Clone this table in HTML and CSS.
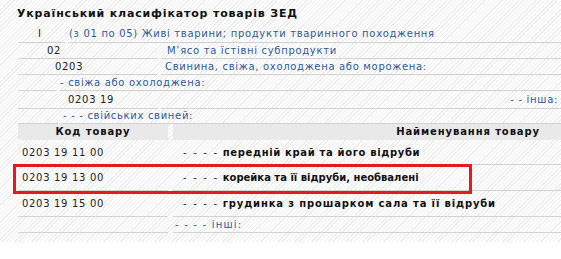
FILE: index.html
```html
<!DOCTYPE html>
<html lang="uk">
<head>
<meta charset="utf-8">
<link rel="stylesheet" href="styles.css">
</head>
<body>
<div class="page">
  <h1 class="title">Український класифікатор товарів ЗЕД</h1>
  <div class="tree">
    <div class="row r1"><div class="c">I</div><div class="d blue">(з 01 по 05) Живі тварини; продукти тваринного походження</div></div>
    <div class="row r2"><div class="c">02</div><div class="d blue">М’ясо та їстівні субпродукти</div></div>
    <div class="row r3"><div class="c">0203</div><div class="d blue">Свинина, свіжа, охолоджена або морожена:</div></div>
    <div class="row r4"><div class="c"></div><div class="d blue">- свіжа або охолоджена:</div></div>
    <div class="row r5"><div class="c">0203 19</div><div class="d blue">- - інша:</div></div>
    <div class="row r6"><div class="c"></div><div class="d blue">- - - свійських свиней:</div></div>
  </div>
  <div class="goods">
    <div class="grow head"><div class="gc">Код товару</div><div class="gd">Найменування товару</div></div>
    <div class="grow item first"><div class="gc">0203 19 11 00</div><div class="gd"><span class="dash">- - - -</span> <b>передній край та його відруби</b></div></div>
    <div class="grow item narrow"><div class="gc">0203 19 13 00</div><div class="gd"><span class="dash">- - - -</span> <b>корейка та її відруби, необвалені</b></div></div>
    <div class="grow item wide"><div class="gc">0203 19 15 00</div><div class="gd"><span class="dash">- - - -</span> <b>грудинка з прошарком сала та її відруби</b></div></div>
    <div class="grow last"><div class="gc"></div><div class="gd blue">- - - - інші:</div></div>
    <div class="mark"></div>
  </div>
</div>
</body>
</html>
```
FILE: styles.css
```css
html, body {
  margin: 0;
  padding: 0;
  background: #fff;
}
body {
  font-family: "DejaVu Sans", Verdana, sans-serif;
  font-size: 10px;
  color: #222;
  letter-spacing: 0.68px;
}
.page {
  height: 242px;
  background: repeating-linear-gradient(-45deg, #ffffff 0 2px, #ececec 2px 3px);
  padding: 0 0 0 18px;
  overflow: hidden;
}
.title {
  margin: 0;
  padding: 7px 0 0 0;
  height: 18px;
  font-size: 11px;
  font-weight: bold;
  color: #111;
  margin-left: -1px;
  letter-spacing: 0.83px;
}
.blue { color: #2e5a98; }
.tree { display: flex; flex-direction: column; }
.row { display: flex; gap: 3px; height: 16px; line-height: 15px; }
.row .c, .row .d { border-bottom: 1px solid #d2d2d2; white-space: nowrap; }
.row .d { flex: 1; }
.r1 { height: 18px; line-height: 17px; }
.r1 .c { width: 47px; padding-left: 20px; box-sizing: border-box; }
.r1 .d { padding-left: 1px; }
.r2 .c { width: 140px; padding-left: 29px; box-sizing: border-box; }
.r2 .d { padding-left: 6px; }
.r3 .c { width: 140px; padding-left: 37px; box-sizing: border-box; }
.r3 .d { padding-left: 4px; }
.r4 .c { width: 39px; }
.r4 .d { padding-left: 0; }
.r5 { height: 18px; line-height: 18px; }
.r5 .c { width: 140px; padding-left: 50px; box-sizing: border-box; }
.r5 .d { text-align: right; padding-right: 3px; }
.r6 { height: 15px; line-height: 14px; }
.r6 .c { width: 40px; }
.r6 .d { padding-left: 2px; }

.goods { position: relative; display: flex; flex-direction: column; }
.grow { display: flex; gap: 5px; white-space: nowrap; }
.gc { width: 150px; box-sizing: border-box; }
.gd { flex: 1; }
.head { height: 16px; line-height: 16px; font-weight: bold; color: #111; letter-spacing: 0.9px; }
.head .gc, .head .gd { background: #e9e9e9; }
.head .gc { text-align: center; }
.head .gd { text-align: right; padding-right: 21px; }
.item { height: 26px; line-height: 26px; }
.item.first { height: 25px; line-height: 25px; }
.item .gc, .item .gd, .last .gc, .last .gd { border-bottom: 1px solid #d2d2d2; }
.item .gc { padding-left: 4px; }
.item .gd { padding-left: 10px; }
.dash { letter-spacing: 1.7px; }
.item b { color: #111; letter-spacing: 0.65px; }
.item.narrow b { letter-spacing: 0; }
.item.wide b { letter-spacing: 0.85px; }
.last { height: 16px; line-height: 16px; }
.last .gd { padding-left: 2px; letter-spacing: 1.2px; }
.mark {
  position: absolute;
  left: -5px;
  top: 40px;
  width: 459px;
  height: 30px;
  box-sizing: border-box;
  border: 3px solid #e41b1b;
}
```
